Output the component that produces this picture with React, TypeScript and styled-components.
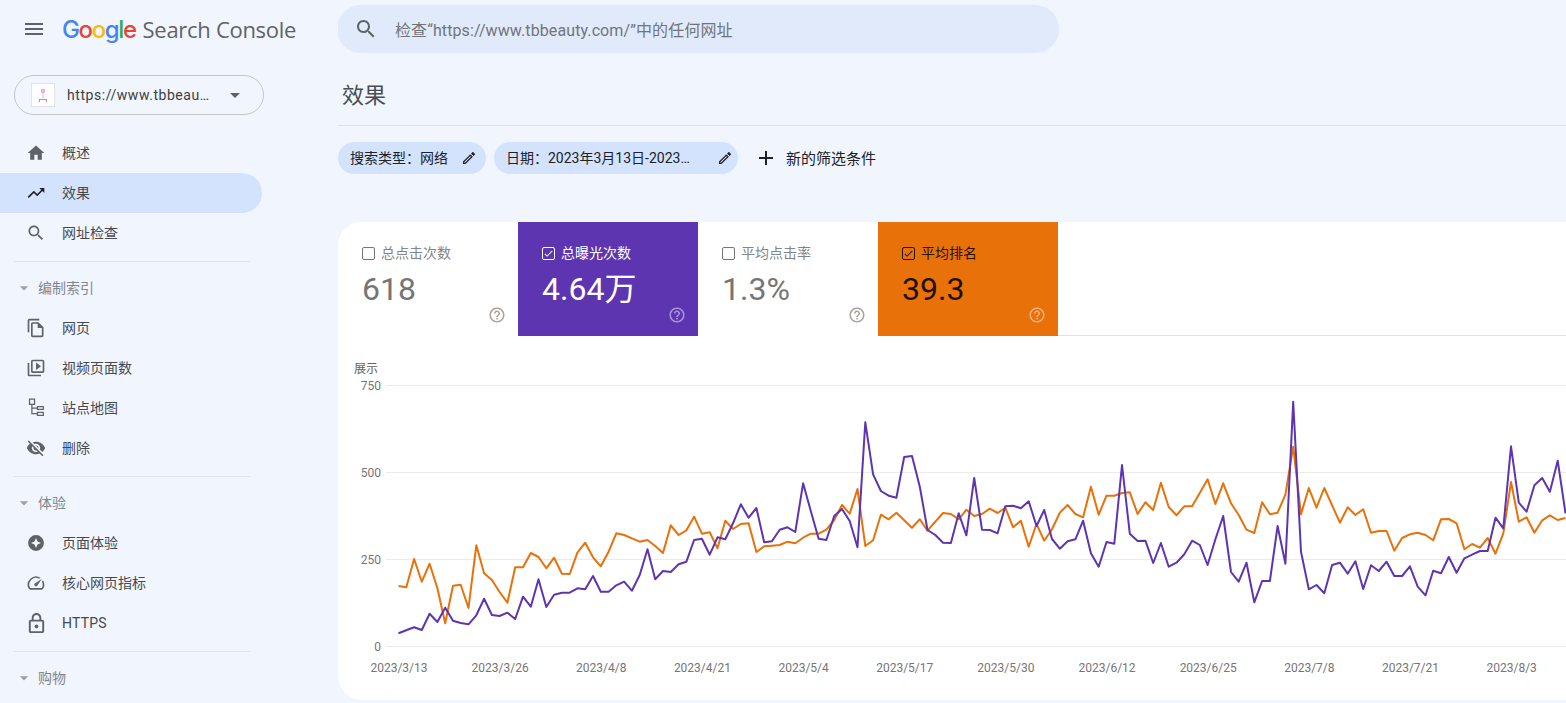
import React from 'react';
import styled, { createGlobalStyle } from 'styled-components';

const GlobalStyle = createGlobalStyle`
    html, body {
        margin: 0;
        padding: 0;
        background: #f1f5fe;
    }
    * {
        box-sizing: border-box;
    }
`;

const FONT = `Roboto, "Noto Sans CJK SC", sans-serif`;

const ICONS: Record<string, string> = {
    menu: 'M3 18h18v-2H3v2zm0-5h18v-2H3v2zm0-7v2h18V6H3z',
    caret: 'M7 10l5 5 5-5z',
    home: 'M10 20v-6h4v6h5v-8h3L12 3 2 12h3v8z',
    trend: 'M16 6l2.29 2.29-4.88 4.88-4-4L2 16.59 3.41 18l6-6 4 4 6.3-6.29L22 12V6z',
    search: 'M15.5 14h-.79l-.28-.27C15.41 12.59 16 11.11 16 9.5 16 5.91 13.09 3 9.5 3S3 5.91 3 9.5 5.91 16 9.5 16c1.61 0 3.09-.59 4.23-1.57l.27.28v.79l5 4.99L20.49 19l-4.99-5zm-6 0C7.01 14 5 11.99 5 9.5S7.01 5 9.5 5 14 7.01 14 9.5 11.99 14 9.5 14z',
    pages: 'M16 1H4c-1.1 0-2 .9-2 2v14h2V3h12V1zm-1 4H8c-1.1 0-1.99.9-1.99 2L6 21c0 1.1.89 2 1.99 2H19c1.1 0 2-.9 2-2V11l-6-6zM8 21V7h6v5h5v9H8z',
    video: 'M4 6H2v14c0 1.1.9 2 2 2h14v-2H4V6zm16-4H8c-1.1 0-2 .9-2 2v12c0 1.1.9 2 2 2h12c1.1 0 2-.9 2-2V4c0-1.1-.9-2-2-2zm0 14H8V4h12v12zM12 5.5v9l6-4.5z',
    sitemap: 'M3.5.5H11v8H3.500zM5 2v5h4.500V2zM13 9.500h8.500v5H13zM14.500 11v2h5.500v-2zM13 16.500h8.500v5H13zM14.500 18v2h5.500v-2zM6.300 8.500h1.500v3H13V13H7.800v5H13v1.500H6.300z',
    hide: 'M12 7c2.76 0 5 2.24 5 5 0 .65-.13 1.26-.36 1.83l2.92 2.92c1.51-1.26 2.7-2.89 3.43-4.75-1.73-4.39-6-7.5-11-7.5-1.4 0-2.74.25-3.98.7l2.16 2.16C10.74 7.13 11.35 7 12 7zM2 4.27l2.28 2.28.46.46C3.08 8.3 1.78 10.02 1 12c1.73 4.39 6 7.5 11 7.5 1.55 0 3.03-.3 4.38-.84l.42.42L19.73 22 21 20.73 3.27 3 2 4.27zM7.53 9.8l1.55 1.55c-.05.21-.08.43-.08.65 0 1.66 1.34 3 3 3 .22 0 .44-.03.65-.08l1.55 1.55c-.67.33-1.41.53-2.2.53-2.76 0-5-2.24-5-5 0-.79.2-1.53.53-2.2zm4.31-.78l3.15 3.15.02-.16c0-1.66-1.34-3-3-3l-.17.01z',
    experience: 'M12 2.500a9.500 9.500 0 1 0 0 19 9.500 9.500 0 0 0 0-19zm0 3.500l1.800 4.200 4.200 1.800-4.200 1.800L12 18l-1.800-4.200L6 12l4.200-1.800z',
    speed: 'M20.380 8.570l-1.230 1.850a8 8 0 0 1-.220 7.580H5.070A8 8 0 0 1 15.580 6.850l1.850-1.230A10 10 0 0 0 3.350 19a2 2 0 0 0 1.720 1h13.850a2 2 0 0 0 1.740-1 10 10 0 0 0-.270-10.430zm-9.790 6.840a2 2 0 0 0 2.830 0l5.660-8.490-8.490 5.660a2 2 0 0 0 0 2.830z',
    lock: 'M18 8h-1V6c0-2.760-2.240-5-5-5S7 3.240 7 6v2H6c-1.100 0-2 .9-2 2v10c0 1.100.9 2 2 2h12c1.100 0 2-.9 2-2V10c0-1.100-.9-2-2-2zM9 6c0-1.660 1.340-3 3-3s3 1.340 3 3v2H9V6zm9 14H6V10h12v10zm-6-3c1.100 0 2-.9 2-2s-.9-2-2-2-2 .9-2 2 .9 2 2 2z',
    edit: 'M14.060 9.020l.92.92L5.920 19H5v-.92l9.060-9.060M17.660 3c-.25 0-.51.1-.7.29l-1.830 1.830 3.750 3.750 1.830-1.830c.39-.39.39-1.020 0-1.410l-2.340-2.340c-.2-.2-.45-.29-.71-.29zm-3.600 3.190L3 17.250V21h3.750L17.810 9.940l-3.750-3.750z',
    plus: 'M19 13h-6v6h-2v-6H5v-2h6V5h2v6h6v2z',
    check: 'M9 16.170L4.830 12l-1.420 1.410L9 19 21 7l-1.410-1.410z',
    help: 'M11 18h2v-2h-2v2zm1-16C6.480 2 2 6.480 2 12s4.480 10 10 10 10-4.480 10-10S17.520 2 12 2zm0 18c-4.410 0-8-3.590-8-8s3.590-8 8-8 8 3.590 8 8-3.590 8-8 8zm0-14c-2.210 0-4 1.790-4 4h2c0-1.100.9-2 2-2s2 .9 2 2c0 2-3 1.750-3 5h2c0-2.250 3-2.500 3-5 0-2.210-1.790-4-4-4z',
};

const Glyph = styled.svg<{ $size: number; $color: string }>`
    flex: none;
    display: block;
    width: ${(p) => p.$size}px;
    height: ${(p) => p.$size}px;
    fill: ${(p) => p.$color};
`;

function Icon({ name, size = 24, color = '#5f6368' }: { name: string; size?: number; color?: string }) {
    return (
        <Glyph viewBox="0 0 24 24" $size={size} $color={color}>
            <path d={ICONS[name]} />
        </Glyph>
    );
}

type NavEntry = { label: string; icon: string; size?: number; active?: boolean; latin?: boolean };
type NavGroup = { title?: string; items: NavEntry[] };

const NAV: NavGroup[] = [
    {
        items: [
            { label: '概述', icon: 'home' },
            { label: '效果', icon: 'trend', active: true },
            { label: '网址检查', icon: 'search' },
        ],
    },
    {
        title: '编制索引',
        items: [
            { label: '网页', icon: 'pages' },
            { label: '视频页面数', icon: 'video' },
            { label: '站点地图', icon: 'sitemap' },
            { label: '删除', icon: 'hide' },
        ],
    },
    {
        title: '体验',
        items: [
            { label: '页面体验', icon: 'experience' },
            { label: '核心网页指标', icon: 'speed' },
            { label: 'HTTPS', icon: 'lock', size: 23, latin: true },
        ],
    },
    { title: '购物', items: [] },
];

const METRICS = [
    { label: '总点击次数', value: '618', tone: 'plain' },
    { label: '总曝光次数', value: '4.64万', tone: 'purple' },
    { label: '平均点击率', value: '1.3%', tone: 'plain' },
    { label: '平均排名', value: '39.3', tone: 'orange' },
] as const;

type Tone = (typeof METRICS)[number]['tone'];

const TONES: Record<Tone, { bg: string; label: string; value: string; box: string; help: string }> = {
    plain: { bg: '#fff', label: '#80868b', value: '#757575', box: '#757575', help: '#a8a29a' },
    purple: { bg: '#5e35b1', label: '#fff', value: '#fff', box: '#fff', help: '#a997d6' },
    orange: { bg: '#e8710a', label: '#2b1200', value: '#1f0f00', box: '#1f0f00', help: '#f5b27a' },
};

/* 折线数据: 从截图读出的像素位置 */
const PURPLE_A = [820, 811, 802, 810, 761, 786, 743, 782, 789, 793, 766, 716, 765, 768, 758, 777, 710, 740, 658, 741, 704, 698, 698, 685, 688, 648, 695, 695, 676, 665, 692, 645, 568, 658, 633, 636, 613, 605, 540, 536, 584, 532, 538, 490, 433, 473];
const PURPLE_B = [384, 487, 484, 449, 442, 456, 310, 393, 476, 480, 408, 387, 423, 502, 127, 283, 333, 347, 353, 231, 228, 320, 450, 465, 488, 489, 400, 466, 294, 449, 450, 460, 379, 377, 385, 364, 438, 390, 477, 506, 484, 478, 422, 520, 560, 486, 491, 255, 461, 483, 482];
const PURPLE_C = [549, 489, 560, 548, 523, 482, 495, 555, 478, 408, 576, 605, 548, 667, 603, 603, 438, 551, 65, 515, 628, 615, 640, 555, 548, 581, 544, 627, 556, 573, 545, 588, 588, 559, 620, 646, 572, 580, 531, 578, 535, 524, 513, 513, 413, 445, 199, 368, 395, 316, 294, 335, 242, 400];
const ORANGE_A = [678, 682, 597, 665, 611, 685, 790, 677, 674, 744, 556, 640, 660, 696, 728, 622, 622, 579, 591, 625, 593, 641, 642, 578, 548, 592, 619, 575, 520, 525, 535, 545, 540, 558, 579, 496, 525, 511, 470, 521, 517, 565, 482, 507, 492, 490];
const ORANGE_B = [516, 499, 497, 495, 485, 490, 473, 461, 461, 449, 420, 375, 401, 327, 498, 481, 404, 418, 398, 421, 443, 418, 452, 425, 399, 402, 418, 389, 408, 402, 386, 399, 383, 442, 422, 500, 432, 482, 448, 398, 375, 402, 412, 320, 404, 347, 347, 339, 337, 402, 367];
const ORANGE_C = [390, 308, 381, 406, 379, 379, 339, 298, 372, 310, 370, 405, 449, 459, 367, 403, 398, 344, 200, 403, 324, 383, 324, 376, 428, 382, 405, 388, 458, 453, 453, 512, 474, 463, 458, 465, 481, 418, 417, 430, 508, 492, 503, 474, 521, 460, 306, 425, 412, 458, 421, 406, 420, 414];

const CHART_LEFT = 338;
const CHART_TOP = 336;
const STEP = 7.78;
const FIRST_X = 398.5 - CHART_LEFT;

function toPoints(a: number[], b: number[], c: number[]) {
    const ys = [...a.map((z) => 360 + z / 3), ...b.map((z) => 380 + z / 3), ...c.map((z) => 380 + z / 3)];
    return ys.map((y, i) => `${(FIRST_X + i * STEP).toFixed(1)},${(y - CHART_TOP).toFixed(1)}`).join(' ');
}

const GRID = [
    { label: '750', y: 385 },
    { label: '500', y: 472 },
    { label: '250', y: 559 },
    { label: '0', y: 646 },
];

const DATES = ['2023/3/13', '2023/3/26', '2023/4/8', '2023/4/21', '2023/5/4', '2023/5/17', '2023/5/30', '2023/6/12', '2023/6/25', '2023/7/8', '2023/7/21', '2023/8/3'];

function Chart() {
    return (
        <ChartSvg viewBox="0 0 1228 364">
            <AxisTitle x={16} y={37}>
                展示
            </AxisTitle>
            {GRID.map((g) => (
                <g key={g.label}>
                    <line x1={48} x2={1228} y1={g.y - CHART_TOP + 0.5} y2={g.y - CHART_TOP + 0.5} stroke="#ebebeb" />
                    <AxisLabel x={43} y={g.y - CHART_TOP + 5} textAnchor="end">
                        {g.label}
                    </AxisLabel>
                </g>
            ))}
            {DATES.map((d, i) => (
                <AxisLabel key={d} x={FIRST_X + 0.5 + i * 101.15} y={336} textAnchor="middle">
                    {d}
                </AxisLabel>
            ))}
            <polyline points={toPoints(ORANGE_A, ORANGE_B, ORANGE_C)} fill="none" stroke="#e8710a" strokeWidth={2} strokeLinejoin="round" />
            <polyline points={toPoints(PURPLE_A, PURPLE_B, PURPLE_C)} fill="none" stroke="#5e35b1" strokeWidth={2} strokeLinejoin="round" />
        </ChartSvg>
    );
}

export default function App() {
    return (
        <Page>
            <GlobalStyle />
            <Sidebar>
                <Brand>
                    <MenuButton>
                        <Icon name="menu" />
                    </MenuButton>
                    <Logo>
                        <span style={{ color: '#4285f4' }}>G</span>
                        <span style={{ color: '#ea4335' }}>o</span>
                        <span style={{ color: '#fbbc05' }}>o</span>
                        <span style={{ color: '#4285f4' }}>g</span>
                        <span style={{ color: '#34a853' }}>l</span>
                        <span style={{ color: '#ea4335' }}>e</span>
                    </Logo>
                    <ProductName>Search Console</ProductName>
                </Brand>

                <PropertyPicker>
                    <Favicon>
                        <svg viewBox="0 0 22 22" width="22" height="22">
                            <path d="M9 5h4v4H9zM10.500 9h1v5h-1z" fill="#eeb4c3" />
                            <path d="M7 15h8v1H7zM7 16h1v2H7zM14 16h1v2h-1z" fill="#e27f9c" />
                        </svg>
                    </Favicon>
                    <PropertyName>https://www.tbbeau…</PropertyName>
                    <Icon name="caret" />
                </PropertyPicker>

                {NAV.map((group, i) => (
                    <NavSection key={i}>
                        {i > 0 && <Rule />}
                        {group.title && (
                            <GroupTitle>
                                <CaretSlot>
                                    <Icon name="caret" size={20} color="#9aa0a6" />
                                </CaretSlot>
                                <Label>{group.title}</Label>
                            </GroupTitle>
                        )}
                        {group.items.map((item) => (
                            <NavItem key={item.label} $active={item.active}>
                                <IconSlot>
                                    <Icon name={item.icon} size={item.size ?? 20} color={item.active ? '#202124' : '#5f6368'} />
                                </IconSlot>
                                {item.latin ? <LatinLabel>{item.label}</LatinLabel> : <Label>{item.label}</Label>}
                            </NavItem>
                        ))}
                    </NavSection>
                ))}
            </Sidebar>

            <Main>
                <SearchBar>
                    <Icon name="search" />
                    <SearchText>检查“https://www.tbbeauty.com/”中的任何网址</SearchText>
                </SearchBar>

                <TitleRow>
                    <Title>效果</Title>
                </TitleRow>

                <Filters>
                    <Chip $width={148} $right={9}>
                        <ChipText>{'搜索类型\uFF1A网络'}</ChipText>
                        <Icon name="edit" size={16} color="#202124" />
                    </Chip>
                    <Chip $width={244} $right={5}>
                        <ChipText>{'日期\uFF1A2023年3月13日-2023…'}</ChipText>
                        <Icon name="edit" size={16} color="#202124" />
                    </Chip>
                    <AddFilter>
                        <Icon name="plus" color="#202124" />
                        <Label>新的筛选条件</Label>
                    </AddFilter>
                </Filters>

                <Card>
                    <Tiles>
                        {METRICS.map((m) => {
                            const tone = TONES[m.tone];
                            return (
                                <Tile key={m.label} $bg={tone.bg}>
                                    <TileHead $color={tone.label}>
                                        <CheckBox $color={tone.box}>
                                            {m.tone !== 'plain' && <Icon name="check" size={11} color={tone.box} />}
                                        </CheckBox>
                                        {m.label}
                                    </TileHead>
                                    <TileValue $color={tone.value}>{m.value}</TileValue>
                                    <HelpSlot>
                                        <Icon name="help" size={18} color={tone.help} />
                                    </HelpSlot>
                                </Tile>
                            );
                        })}
                    </Tiles>
                    <Chart />
                </Card>
            </Main>
        </Page>
    );
}

const Page = styled.div`
    display: flex;
    width: 100vw;
    height: 100vh;
    overflow: hidden;
    background: #f1f5fe;
    font-family: ${FONT};
    color: #3c4043;
`;

const Sidebar = styled.aside`
    flex: none;
    width: 338px;
`;

const Brand = styled.div`
    display: flex;
    align-items: center;
    height: 58px;
`;

const MenuButton = styled.div`
    width: 62px;
    padding-left: 22px;
`;

const Logo = styled.div`
    font-family: Inter, ${FONT};
    font-size: 24px;
    font-weight: 500;
    letter-spacing: -1.4px;
    margin-right: 7px;
`;

const ProductName = styled.div`
    font-family: "Open Sans", ${FONT};
    font-size: 22px;
    letter-spacing: -0.3px;
    color: #5f6368;
`;

const PropertyPicker = styled.div`
    display: flex;
    align-items: center;
    width: 250px;
    height: 40px;
    margin: 17px 0 18px 14px;
    padding: 0 16px;
    border: 1px solid #c4c7c5;
    border-radius: 20px;
`;

const Favicon = styled.div`
    flex: none;
    width: 24px;
    height: 24px;
    margin-right: 12px;
    background: #fff;
    border: 1px solid #e3e3e3;
`;

const PropertyName = styled.div`
    flex: none;
    width: 145px;
    margin-right: 11px;
    font-size: 14px;
    letter-spacing: 0.55px;
    white-space: nowrap;
    color: #3c4043;
`;

const NavSection = styled.nav`
    display: flex;
    flex-direction: column;
`;

const Rule = styled.div`
    width: 236px;
    height: 1px;
    margin: 8px 0 6px 14px;
    background: #dfe3ea;
`;

const Label = styled.span`
    margin-bottom: 2px;
`;

const LatinLabel = styled.span`
    letter-spacing: 0.2px;
`;

const GroupTitle = styled.div`
    display: flex;
    align-items: center;
    height: 40px;
    font-size: 14px;
    color: #80868b;
`;

const CaretSlot = styled.div`
    width: 38px;
    padding-left: 14px;
`;

const NavItem = styled.div<{ $active?: boolean }>`
    display: flex;
    align-items: center;
    gap: 14px;
    width: 262px;
    height: 40px;
    padding-left: 24px;
    font-size: 14px;
    color: #46494d;
    border-radius: 0 20px 20px 0;
    background: ${(p) => (p.$active ? '#d3e3fd' : 'transparent')};
`;

const IconSlot = styled.div`
    display: flex;
    align-items: center;
    justify-content: center;
    width: 24px;
`;

const Main = styled.main`
    flex: 1;
    min-width: 0;
    overflow: hidden;
`;

const SearchBar = styled.div`
    display: flex;
    align-items: center;
    gap: 17px;
    width: 722px;
    height: 48px;
    margin: 5px 0 0 -1px;
    padding-left: 17px;
    border-radius: 24px;
    background: #e1eafb;
`;

const SearchText = styled.div`
    font-size: 16px;
    letter-spacing: 0.1px;
    color: #70757a;
`;

const TitleRow = styled.div`
    display: flex;
    align-items: center;
    height: 73px;
    padding: 8px 0 0 4px;
    border-bottom: 1px solid #dde1e8;
`;

const Title = styled.h1`
    margin: 0;
    font-size: 22px;
    font-weight: 400;
    color: #4a4e52;
`;

const Filters = styled.div`
    display: flex;
    align-items: center;
    gap: 8px;
    margin-top: 16px;
`;

const Chip = styled.div<{ $width: number; $right: number }>`
    display: flex;
    align-items: center;
    justify-content: space-between;
    width: ${(p) => p.$width}px;
    height: 32px;
    padding: 0 ${(p) => p.$right}px 0 12px;
    border-radius: 16px;
    background: #d3e3fd;
`;

const ChipText = styled.div`
    margin-bottom: 2px;
    font-size: 14px;
    color: #202124;
    white-space: nowrap;
`;

const AddFilter = styled.div`
    display: flex;
    align-items: center;
    gap: 8px;
    margin-left: 8px;
    font-size: 15px;
    color: #202124;
`;

const Card = styled.section`
    width: calc(100% + 24px);
    height: 478px;
    margin-top: 48px;
    background: #fff;
    border-radius: 24px;
    overflow: hidden;
`;

const Tiles = styled.div`
    display: flex;
    height: 114px;
    border-bottom: 1px solid #e0e0e0;
`;

const Tile = styled.div<{ $bg: string }>`
    position: relative;
    width: 180px;
    height: 114px;
    padding: 22px 24px 0;
    background: ${(p) => p.$bg};
`;

const TileHead = styled.div<{ $color: string }>`
    display: flex;
    align-items: center;
    gap: 6px;
    height: 16px;
    font-size: 14px;
    color: ${(p) => p.$color};
`;

const CheckBox = styled.div<{ $color: string }>`
    display: flex;
    align-items: center;
    justify-content: center;
    margin-top: 2px;
    width: 13px;
    height: 13px;
    border: 1px solid ${(p) => p.$color};
    border-radius: 2px;
`;

const TileValue = styled.div<{ $color: string }>`
    margin-top: 9px;
    font-size: 32px;
    line-height: 40px;
    color: ${(p) => p.$color};
`;

const HelpSlot = styled.div`
    position: absolute;
    right: 12px;
    bottom: 12px;
`;

const ChartSvg = styled.svg`
    display: block;
    width: 1228px;
    height: 364px;
`;

const AxisLabel = styled.text`
    font-family: ${FONT};
    font-size: 12px;
    fill: #757575;
`;

const AxisTitle = styled.text`
    font-family: ${FONT};
    font-size: 12px;
    fill: #5f6368;
`;
